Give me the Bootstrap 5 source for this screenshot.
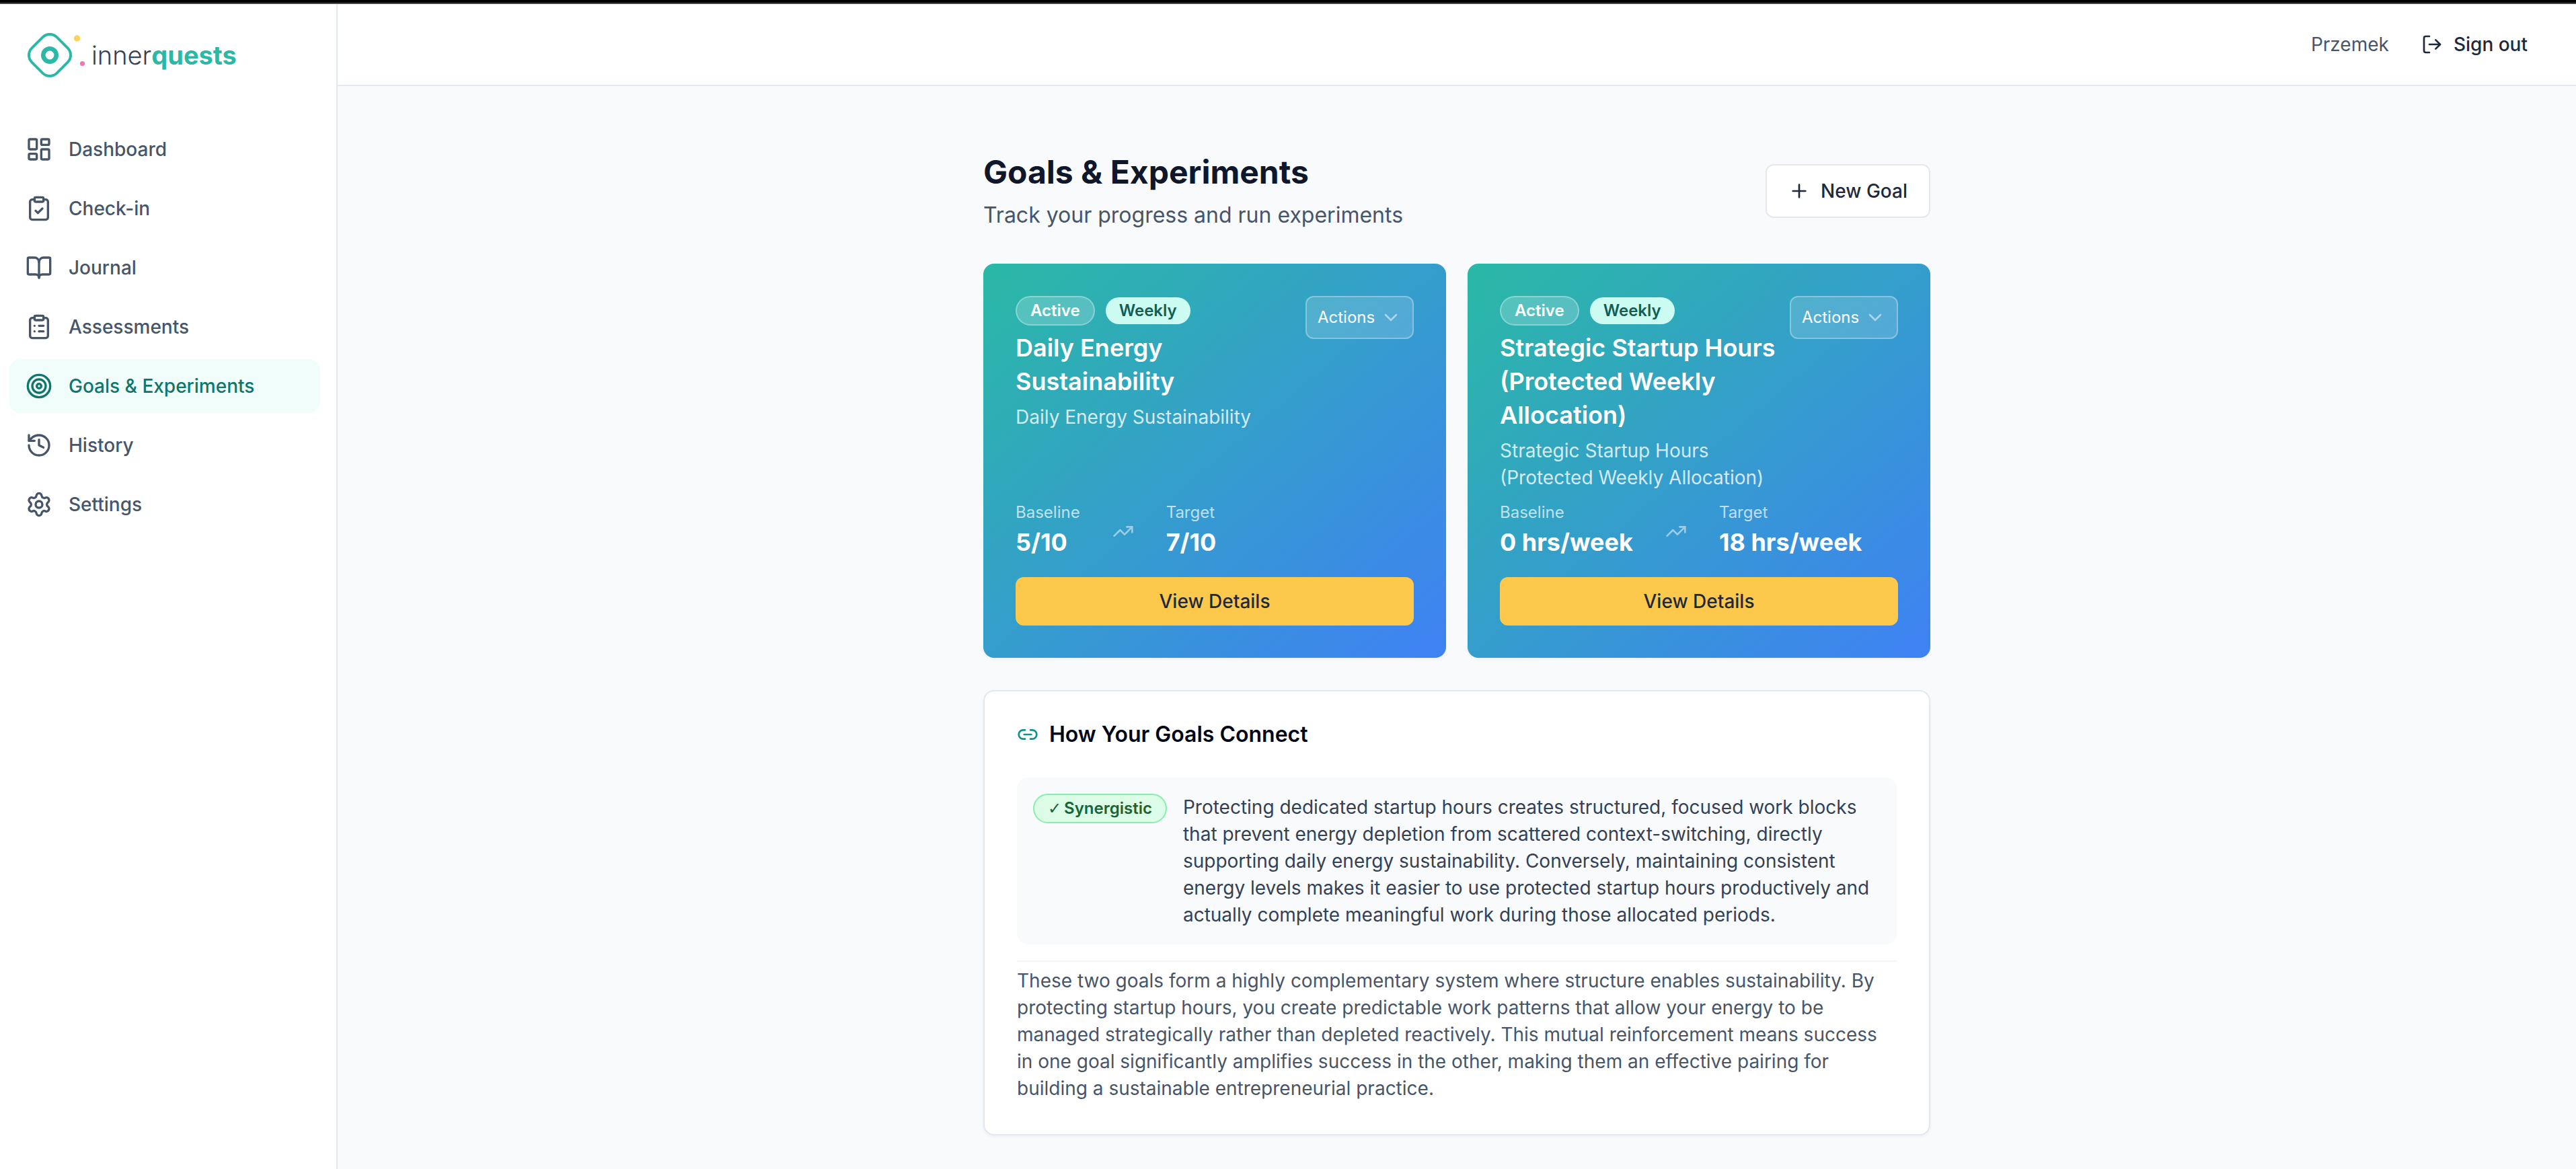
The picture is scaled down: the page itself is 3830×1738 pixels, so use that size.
<!DOCTYPE html>
<html lang="en">
<head>
<meta charset="utf-8">
<meta name="viewport" content="width=device-width, initial-scale=1">
<title>Goals &amp; Experiments – innerquests</title>
<link href="https://cdn.jsdelivr.net/npm/bootstrap@5.3.0/dist/css/bootstrap.min.css" rel="stylesheet">
<style>
  :root {
    --teal: #2bb8a7;
    --ink: #1e293b;
    --slate: #475569;
    --line: #e2e8f0;
  }
  body {
    font-family: Inter, "Liberation Sans", sans-serif;
    font-size: 28px;
    line-height: 40px;
    color: var(--slate);
    background: #f8fafc;
  }
  .top-strip { height: 6px; background: #000; border-bottom: 2px solid #444; }
  .icon { width: 32px; height: 32px; flex: none; fill: none; stroke: currentColor; stroke-width: 2; stroke-linecap: round; stroke-linejoin: round; }

  .sidebar { width: 502px; flex: none; background: #fff; border-right: 2px solid var(--line); padding: 40px 24px 40px 14px; }
  .brand { color: #374151; font-size: 38px; font-weight: 300; margin: 0 0 64px 24px; gap: 6px; }
  .brand svg { width: 92px; height: 72px; }
  .brand b { color: var(--teal); font-weight: 700; }
  .side-nav { gap: 8px; }
  .side-nav .nav-link { display: flex; align-items: center; gap: 24px; height: 80px; padding: 0 24px; border-radius: 16px; color: var(--slate); font-weight: 500; }
  .side-nav .nav-link.active { background: #f0fdfa; color: #0f766e; }
  .side-nav .icon { width: 40px; height: 40px; }

  .app-bar { height: 122px; background: #fff; border-bottom: 2px solid var(--line); padding: 0 48px; gap: 24px; }
  .btn-app { --bs-btn-font-size: 28px; --bs-btn-line-height: 40px; --bs-btn-font-weight: 500; --bs-btn-color: var(--ink); --bs-btn-border-width: 2px; --bs-btn-border-radius: 12px; }
  .btn-signout { --bs-btn-padding-x: 22px; gap: 16px; }
  .btn-new { --bs-btn-padding-x: 32px; --bs-btn-padding-y: 18px; --bs-btn-bg: #fff; --bs-btn-border-color: #e5e7eb; gap: 16px; }
  .btn-view { --bs-btn-padding-y: 14px; --bs-btn-bg: #fcc94d; --bs-btn-border-color: #fcc94d; }

  .page { max-width: 1536px; padding: 96px 64px 48px; gap: 48px; }
  .page h1 { font-size: 48px; line-height: 64px; font-weight: 700; color: #0f172a; margin: 0 0 8px; }
  .page .subtitle { font-size: 32px; line-height: 48px; margin: 0; }

  .goals { --bs-gutter-x: 32px; }
  .goal { border: 0; border-radius: 16px; padding: 48px; color: #fff; background: linear-gradient(to bottom right, #2ab9a5, #3f81f4); box-shadow: 0 2px 4px rgba(0,0,0,.05); }
  .goal h2 { font-size: 36px; line-height: 50px; font-weight: 600; margin: 8px 0; }
  .goal p { color: rgba(255,255,255,.8); margin: 0; }
  .goal-top { gap: 16px; }
  .pill { display: inline-block; font-size: 24px; line-height: 32px; font-weight: 600; padding: 4px 20px; border-radius: 22px; white-space: nowrap; }
  .pill-active { border: 2px solid rgba(255,255,255,.3); background: rgba(255,255,255,.2); }
  .pill-weekly { background: #ccfbf1; color: #115e59; }
  .pill-synergy { display: flex; gap: 4px; border: 2px solid #86efac; background: #dcfce7; color: #166534; }
  .tick { font-family: "DejaVu Sans", sans-serif; }
  .actions-select {
    width: 161px; height: 64px; flex: none; padding: 0 16px; font-size: 24px; color: #fff;
    border: 2px solid rgba(255,255,255,.3); border-radius: 12px; background-color: rgba(255,255,255,.15);
    background-image: url("data:image/svg+xml,%3Csvg xmlns='http://www.w3.org/2000/svg' viewBox='0 0 24 24' fill='none' stroke='white' stroke-opacity='.5' stroke-width='2' stroke-linecap='round' stroke-linejoin='round'%3E%3Cpath d='m6 9 6 6 6-6'/%3E%3C/svg%3E");
    background-size: 32px; background-position: right 16px center;
  }
  .stats { gap: 48px; margin: auto 0 24px; padding-top: 16px; }
  .stats dt { font-size: 24px; line-height: 32px; font-weight: 400; color: rgba(255,255,255,.7); }
  .stats dd { font-size: 36px; line-height: 56px; font-weight: 700; margin: 0; }
  .stats .icon { opacity: .5; }

  .connect { border: 2px solid var(--line); border-radius: 16px; padding: 48px; box-shadow: 0 2px 4px rgba(0,0,0,.05); }
  .connect h2 { font-size: 32px; line-height: 32px; font-weight: 600; color: #020617; margin: 0 0 48px; gap: 16px; }
  .connect h2 .icon { color: #0d9488; }
  .relation { background: #f8fafc; border-radius: 16px; padding: 24px; gap: 24px; color: #334155; }
  .summary { border-top: 2px solid #f1f5f9; margin-top: 24px; padding-top: 8px; }
</style>
<script src="https://cdn.jsdelivr.net/npm/bootstrap@5.3.0/dist/js/bootstrap.bundle.min.js"></script>
</head>
<body class="d-flex flex-column min-vh-100">
<div class="top-strip"></div>
<div class="d-flex flex-grow-1">

  <aside class="sidebar">
    <a class="brand d-flex align-items-center text-decoration-none" href="#">
      <svg viewBox="38 46 92 72" aria-hidden="true">
        <g fill="none" stroke="#2bb8a7">
          <rect x="47.700" y="55.700" width="52.600" height="52.600" rx="15" stroke-width="4" transform="rotate(45 74 82)"/>
          <circle cx="74" cy="82" r="9.700" stroke-width="6.600"/>
        </g>
        <circle cx="114.500" cy="57" r="4.700" fill="#fcd360"/>
        <circle cx="122.500" cy="94.500" r="3.600" fill="#f472b6"/>
      </svg>
      <span>inner<b>quests</b></span>
    </a>
    <nav class="side-nav nav flex-column">
      <a class="nav-link" href="#"><svg class="icon" viewBox="0 0 24 24"><rect x="3" y="3" width="7" height="9" rx="1"/><rect x="14" y="3" width="7" height="5" rx="1"/><rect x="14" y="12" width="7" height="9" rx="1"/><rect x="3" y="16" width="7" height="5" rx="1"/></svg>Dashboard</a>
      <a class="nav-link" href="#"><svg class="icon" viewBox="0 0 24 24"><rect x="8" y="2" width="8" height="4" rx="1"/><path d="M16 4h2a2 2 0 0 1 2 2v14a2 2 0 0 1-2 2H6a2 2 0 0 1-2-2V6a2 2 0 0 1 2-2h2"/><path d="m9 14 2 2 4-4"/></svg>Check-in</a>
      <a class="nav-link" href="#"><svg class="icon" viewBox="0 0 24 24"><path d="M12 7v14"/><path d="M3 18a1 1 0 0 1-1-1V4a1 1 0 0 1 1-1h5a4 4 0 0 1 4 4 4 4 0 0 1 4-4h5a1 1 0 0 1 1 1v13a1 1 0 0 1-1 1h-6a3 3 0 0 0-3 3 3 3 0 0 0-3-3z"/></svg>Journal</a>
      <a class="nav-link" href="#"><svg class="icon" viewBox="0 0 24 24"><rect x="8" y="2" width="8" height="4" rx="1"/><path d="M16 4h2a2 2 0 0 1 2 2v14a2 2 0 0 1-2 2H6a2 2 0 0 1-2-2V6a2 2 0 0 1 2-2h2"/><path d="M12 11h4M12 16h4M8 11h.01M8 16h.01"/></svg>Assessments</a>
      <a class="nav-link active" aria-current="page" href="#"><svg class="icon" viewBox="0 0 24 24"><circle cx="12" cy="12" r="10"/><circle cx="12" cy="12" r="6"/><circle cx="12" cy="12" r="2"/></svg>Goals &amp; Experiments</a>
      <a class="nav-link" href="#"><svg class="icon" viewBox="0 0 24 24"><path d="M3 12a9 9 0 1 0 9-9 9.750 9.750 0 0 0-6.740 2.740L3 8"/><path d="M3 3v5h5"/><path d="M12 7v5l4 2"/></svg>History</a>
      <a class="nav-link" href="#"><svg class="icon" viewBox="0 0 24 24"><path d="M9.671 4.136a2.340 2.340 0 0 1 4.659 0 2.340 2.340 0 0 0 3.319 1.915 2.340 2.340 0 0 1 2.330 4.033 2.340 2.340 0 0 0 0 3.831 2.340 2.340 0 0 1-2.330 4.033 2.340 2.340 0 0 0-3.319 1.915 2.340 2.340 0 0 1-4.659 0 2.340 2.340 0 0 0-3.320-1.915 2.340 2.340 0 0 1-2.330-4.033 2.340 2.340 0 0 0 0-3.831A2.340 2.340 0 0 1 6.350 6.051a2.340 2.340 0 0 0 3.319-1.915"/><circle cx="12" cy="12" r="3"/></svg>Settings</a>
    </nav>
  </aside>

  <div class="flex-grow-1">
    <header class="app-bar d-flex align-items-center justify-content-end">
      <span>Przemek</span>
      <button type="button" class="btn btn-app btn-signout d-flex align-items-center"><svg class="icon" viewBox="0 0 24 24"><path d="M9 21H5a2 2 0 0 1-2-2V5a2 2 0 0 1 2-2h4"/><path d="m16 17 5-5-5-5"/><path d="M21 12H9"/></svg>Sign out</button>
    </header>

    <main class="page container-fluid d-flex flex-column">
      <div class="d-flex align-items-center justify-content-between">
        <div>
          <h1>Goals &amp; Experiments</h1>
          <p class="subtitle">Track your progress and run experiments</p>
        </div>
        <button type="button" class="btn btn-app btn-new d-flex align-items-center"><svg class="icon" viewBox="0 0 24 24"><path d="M5 12h14M12 5v14"/></svg>New Goal</button>
      </div>

      <div class="goals row row-cols-2">
        <div class="col">
          <article class="goal card h-100">
            <div class="goal-top d-flex justify-content-between align-items-start">
              <div>
                <div class="d-flex align-items-center gap-3"><span class="pill pill-active">Active</span><span class="pill pill-weekly">Weekly</span></div>
                <h2>Daily Energy Sustainability</h2>
                <p>Daily Energy Sustainability</p>
              </div>
              <select class="actions-select form-select" aria-label="Actions for Daily Energy Sustainability"><option>Actions</option></select>
            </div>
            <dl class="stats d-flex align-items-center">
              <div><dt>Baseline</dt><dd>5/10</dd></div>
              <svg class="icon" viewBox="0 0 24 24"><path d="m22 7-8.500 8.500-5-5L2 17"/><path d="M16 7h6v6"/></svg>
              <div><dt>Target</dt><dd>7/10</dd></div>
            </dl>
            <button type="button" class="btn btn-app btn-view w-100">View Details</button>
          </article>
        </div>
        <div class="col">
          <article class="goal card h-100">
            <div class="goal-top d-flex justify-content-between align-items-start">
              <div>
                <div class="d-flex align-items-center gap-3"><span class="pill pill-active">Active</span><span class="pill pill-weekly">Weekly</span></div>
                <h2>Strategic Startup Hours (Protected Weekly Allocation)</h2>
                <p>Strategic Startup Hours (Protected Weekly Allocation)</p>
              </div>
              <select class="actions-select form-select" aria-label="Actions for Strategic Startup Hours"><option>Actions</option></select>
            </div>
            <dl class="stats d-flex align-items-center">
              <div><dt>Baseline</dt><dd>0 hrs/week</dd></div>
              <svg class="icon" viewBox="0 0 24 24"><path d="m22 7-8.500 8.500-5-5L2 17"/><path d="M16 7h6v6"/></svg>
              <div><dt>Target</dt><dd>18 hrs/week</dd></div>
            </dl>
            <button type="button" class="btn btn-app btn-view w-100">View Details</button>
          </article>
        </div>
      </div>

      <section class="connect card">
        <h2 class="d-flex align-items-center"><svg class="icon" viewBox="0 0 24 24"><path d="M9 17H7A5 5 0 0 1 7 7h2"/><path d="M15 7h2a5 5 0 1 1 0 10h-2"/><path d="M8 12h8"/></svg>How Your Goals Connect</h2>
        <div class="relation d-flex align-items-start">
          <span class="pill pill-synergy"><span class="tick">✓</span>Synergistic</span>
          <p class="mb-0">Protecting dedicated startup hours creates structured, focused work blocks that prevent energy depletion from scattered context-switching, directly supporting daily energy sustainability. Conversely, maintaining consistent energy levels makes it easier to use protected startup hours productively and actually complete meaningful work during those allocated periods.</p>
        </div>
        <p class="summary mb-0">These two goals form a highly complementary system where structure enables sustainability. By protecting startup hours, you create predictable work patterns that allow your energy to be managed strategically rather than depleted reactively. This mutual reinforcement means success in one goal significantly amplifies success in the other, making them an effective pairing for building a sustainable entrepreneurial practice.</p>
      </section>
    </main>
  </div>
</div>
</body>
</html>
